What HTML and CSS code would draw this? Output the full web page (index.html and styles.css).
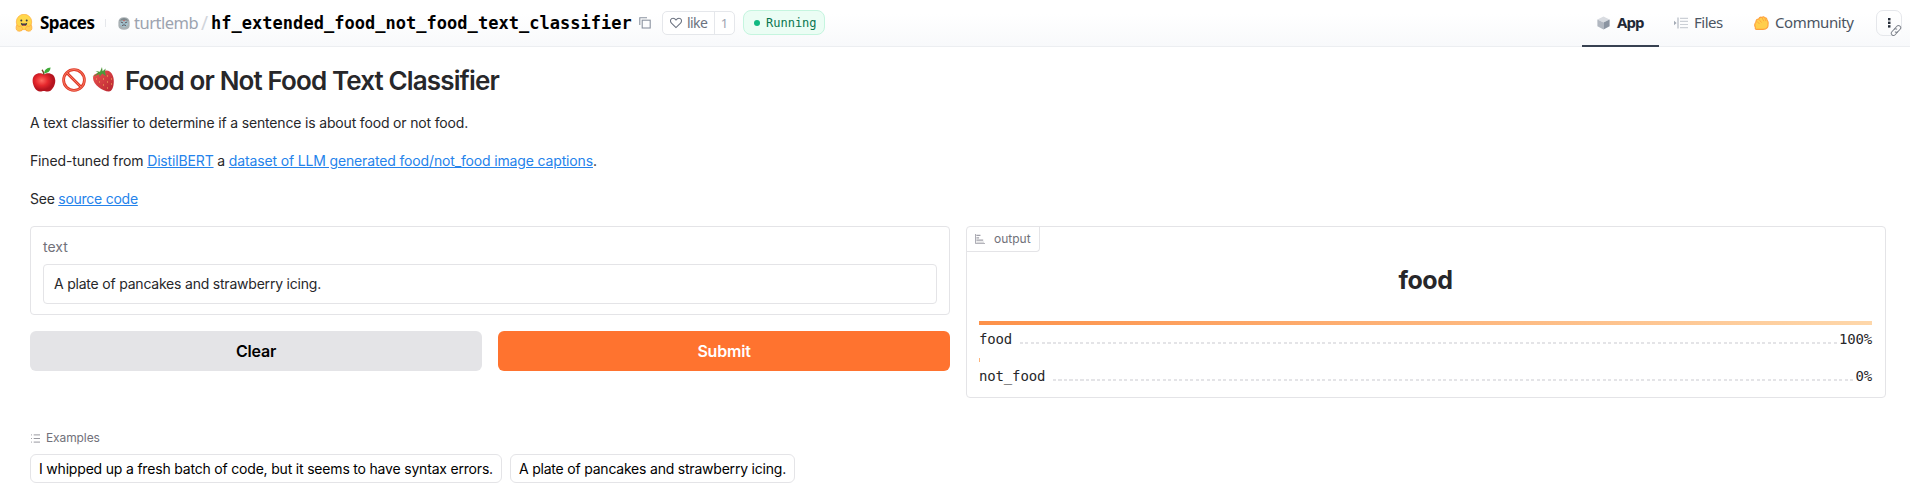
FILE: index.html
```html
<!DOCTYPE html>
<html lang="en">
<head>
<meta charset="utf-8">
<title>Food or Not Food Text Classifier</title>
<link rel="stylesheet" href="styles.css">
</head>
<body>
<header class="topbar">
  <svg class="hug" viewBox="0 0 18 18"><circle cx="9" cy="8" r="7.7" fill="#ffd84d" stroke="#ffb545" stroke-width=".8"/><circle cx="6.3" cy="6.4" r="1" fill="#3a3b45"/><circle cx="11.7" cy="6.4" r="1" fill="#3a3b45"/><path d="M5.8 8.7Q9 10.4 12.2 8.7Q12 12 9 12Q6 12 5.8 8.7Z" fill="#3a3b45"/><path d="M7.3 11.3Q9 10.2 10.7 11.3Q9 12.4 7.3 11.3Z" fill="#f0545a"/><path d="M1.3 12Q.3 17.2 4.4 17.2Q8 17.2 7.6 14.3L5.4 11.6L4.4 13L2.2 10.8Z" fill="#ffcd55" stroke="#ffab3d" stroke-width=".8"/><path d="M16.7 12Q17.7 17.2 13.6 17.2Q10 17.2 10.4 14.3L12.6 11.6L13.6 13L15.8 10.8Z" fill="#ffcd55" stroke="#ffab3d" stroke-width=".8"/></svg>
  <span class="spaces">Spaces</span>
  <span class="sep"></span>
  <svg class="avatar" viewBox="0 0 12 13"><path d="M.4 5Q.6.3 6 .3Q11.4.3 11.6 5V9Q11 12.8 6 12.8Q1 12.8.4 9Z" fill="#a9b1b4"/><path d="M1 4Q6-2 11 4L9 3.4H3Z" fill="#7f898d"/><path d="M2.2 4.4L6 3.4L9.8 4.4V8L6 10.4L2.2 8Z" fill="#a3c5d1"/><path d="M2.8 5L5.2 6M9.2 5L6.8 6M4 8.6Q6 7 8 8.6" stroke="#594a50" stroke-width=".9" fill="none"/><path d="M5.2 3L6 5L6.8 3Z" fill="#d44d45"/></svg>
  <span class="owner">turtlemb</span>
  <span class="slash">/</span>
  <span class="repo">hf_extended_food_not_food_text_classifier</span>
  <svg class="copy" viewBox="0 0 12 12" fill="none" stroke="#8a93a0" stroke-width="1.1"><path d="M.8 8V.8H8"/><rect x="3.2" y="3.2" width="8" height="7.8"/></svg>
  <div class="like"><span class="like-main"><svg viewBox="0 0 13 12" fill="none" stroke="#6b7280" stroke-width="1.1"><path d="M6.5 11L1.6 6.2C-.6 3.4 1 .9 3.3.9C5 .9 6 2 6.5 2.8C7 2 8 .9 9.7.9C12 .9 13.6 3.4 11.4 6.2Z"/></svg><span class="like-text">like</span></span><span class="like-count">1</span></div>
  <div class="status"><i></i><span>Running</span></div>
  <nav class="tabs">
    <a class="tab active"><svg class="cube" viewBox="0 0 13 14"><path d="M6.5.5L12.6 3.5L6.5 6.6L.4 3.5Z" fill="#d9dce1"/><path d="M.4 3.5L6.5 6.6V13.5L.4 10.3Z" fill="#b1b7c0"/><path d="M12.6 3.5L6.5 6.6V13.5L12.6 10.3Z" fill="#8b94a1"/></svg><span class="t-app">App</span></a>
    <a class="tab files"><svg class="tree" viewBox="0 0 14 12"><path d="M0 3.7L2.6 6L0 8.3Z" fill="#a4abb6"/><path d="M4 .5V11.5" stroke="#a4abb6" stroke-width="1"/><path d="M6 1.3H14M6 4.4H14M6 7.5H14M6 10.6H14" stroke="#ccd0d6" stroke-width="1.2"/></svg><span class="t-files">Files</span></a>
    <a class="tab community"><svg class="clap" viewBox="0 0 15 14"><path d="M.8 8.5Q1.2 6.8 1.8 6.4Q2 2.8 4.6 3Q6 .4 8 1.4Q9.6-.2 11 1.8Q13 1.6 13 4Q14.6 5.8 14 8Q14.6 13.2 9 13.4H2.6Q.8 13 1.4 11.2Q.5 10 .8 8.5Z" fill="#ffce4d" stroke="#ff9f3b" stroke-width="1.1"/><path d="M8 1.6L9.8 5.2M11 2.2L11.8 5.2M5 3.4L7.5 6.6M3 5.4L5.5 8" stroke="#ff9f3b" stroke-width=".8"/></svg><span class="t-comm">Community</span></a>
  </nav>
  <div class="more"><svg class="dots" viewBox="0 0 3 10" fill="#252c38"><rect width="2.5" height="2.4"/><rect y="3.6" width="2.5" height="2.4"/><rect y="7.2" width="2.5" height="2.4"/></svg>
  <svg class="link" viewBox="0 0 12 13"><circle cx="6" cy="6.5" r="6" fill="#fcfcfd"/><g transform="rotate(-48 6 6.5)" fill="none" stroke="#7d828b" stroke-width="1"><path d="M6.6 8.7H2.3A2.2 2.2 0 0 1 2.3 4.3H5.4A2.2 2.2 0 0 1 7.6 6.5"/><path d="M5.4 4.3H9.7A2.2 2.2 0 0 1 9.7 8.7H6.6A2.2 2.2 0 0 1 4.4 6.5"/></g></svg></div>
</header>
<main>
  <h1><svg class="emoji apple" viewBox="0 0 24 25"><defs><radialGradient id="ra" cx=".4" cy=".4"><stop offset="0" stop-color="#ff6a61"/><stop offset=".55" stop-color="#e6282d"/><stop offset="1" stop-color="#b5141f"/></radialGradient></defs><path d="M12 7.5C15 5.2 22.8 5.4 23.3 13.5C23.4 19 19.2 24.8 15.8 24.6C13.5 24.6 13 24 11.8 24C10.5 24 10 24.6 8 24.6C4 24.6.6 18.5.6 13.5C.8 5.6 8.5 5 12 7.5Z" fill="url(#ra)"/><path d="M12 8Q11.5 4.5 10 2.8" stroke="#774523" stroke-width="1.3" fill="none"/><path d="M12 6.4Q12.5 1 18.6.4Q18.3 5.7 12 6.4Z" fill="#3eaa38"/></svg><svg class="emoji" viewBox="0 0 24 25"><circle cx="12" cy="13" r="10.4" fill="#fff" stroke="#df3826" stroke-width="2.8"/><path d="M5 6L19 20" stroke="#df3826" stroke-width="2.8"/><circle cx="12" cy="13" r="10.5" fill="none" stroke="#fb8a72" stroke-width=".8"/><path d="M5 6L19 20" stroke="#fb8a72" stroke-width=".8"/></svg><svg class="emoji" viewBox="0 0 24 25"><defs><linearGradient id="rs" x2="1" y2="1"><stop offset="0" stop-color="#ed5350"/><stop offset="1" stop-color="#b82530"/></linearGradient></defs><path d="M1 11C1 5.6 8 6 13 3.8C18 2 22 8 21.8 14C21.8 20 20 24.5 16.8 24.6C11 24 1 18 1 11Z" fill="url(#rs)"/><path d="M0 9.6Q4.5 8 6 5.6L3.6 4L8 4.8L10 0L10.6 4.3L13.7 1.6L13 4.8L14 9.2L10.3 6.6L7.4 10L7.5 7Q4 8.6 0 9.6Z" fill="#4d983b"/><path d="M4 12h1M7 15h1M11 12h1M15 9h1M19 12h1M15 15h1M11 18h1M19 17h1M15 21h1" stroke="#f3bb59" stroke-width="1.2"/></svg><span class="title">Food or Not Food Text Classifier</span></h1>
  <p class="p1">A text classifier to determine if a sentence is about food or not food.</p>
  <p class="p2">Fined-tuned from <a>DistilBERT</a> a <a>dataset of LLM generated food/not_food image captions</a>.</p>
  <p class="p3">See <a>source code</a></p>
  <div class="columns">
    <section class="left">
      <div class="card"><label>text</label><div class="input"><span>A plate of pancakes and strawberry icing.</span></div></div>
      <div class="buttons"><button class="clear">Clear</button><button class="submit">Submit</button></div>
    </section>
    <section class="card output">
      <div class="tag"><svg viewBox="0 0 11 11"><path d="M.6 0V10.6H11" stroke="#a1a1aa" stroke-width="1" fill="none"/><path d="M1.5 1.5H6M1.5 4.2H4.5M1.5 6.7H9" stroke="#a1a1aa" stroke-width="1.4"/><path d="M1.5 9H10" stroke="#c4c4c9" stroke-width="1"/></svg><span>output</span></div>
      <h2><span>food</span></h2>
      <div class="bar" style="width:100%"></div>
      <div class="row"><span>food</span><i></i><span>100%</span></div>
      <div class="bar" style="width:1px"></div>
      <div class="row"><span>not_food</span><i></i><span>0%</span></div>
    </section>
  </div>
  <div class="examples-title"><svg viewBox="0 0 10 9" stroke="#8d8d95" stroke-width="1"><path d="M0 .5H1M3 .5H10M0 4.5H1M3 4.5H10M0 8.5H1M3 8.5H10"/></svg><span>Examples</span></div>
  <div class="chips"><span class="chip c1">I whipped up a fresh batch of code, but it seems to have syntax errors.</span><span class="chip c2">A plate of pancakes and strawberry icing.</span></div>
</main>
</body>
</html>
```
FILE: styles.css
```css
* { box-sizing: border-box; }
body { margin: 0; background: #fff; color: #27272a; font: 14px/20px Inter, sans-serif; height: 492px; overflow: hidden; }
svg { display: block; flex: none; }
span { white-space: nowrap; }
.topbar { height: 47px; display: flex; align-items: center; border-bottom: 1px solid #eceef1; background: linear-gradient(#fff 30%, #f8f9fb); padding: 0 8px 0 15px; font-family: "Noto Sans", sans-serif; font-size: 15px; }
.hug { width: 18px; height: 18px; margin: -1px 7px 0 0; }
.spaces { width: 55px; padding-bottom: 1px; font-weight: 700; color: #000; font-size: 17px; letter-spacing: -.55px; }
.sep { width: 1px; height: 8px; background: #e5e7eb; margin: 0 12px 0 10px; }
.avatar { width: 12px; height: 13px; margin-right: 4px; }
.owner { width: 67px; padding-bottom: 1px; color: #9ca3af; font-size: 16.5px; letter-spacing: -.5px; }
.slash { width: 10px; padding-bottom: 1px; color: #d1d5db; font-size: 19px; }
.repo { width: 428px; color: #000; font: 700 17px/20px "DejaVu Sans Mono", monospace; letter-spacing: .03px; }
.copy { width: 12px; height: 12px; margin-right: 11px; }
.like { width: 73px; height: 24px; border: 1px solid #e5e7eb; border-radius: 5px; display: flex; background: #fff; color: #6b7280; font-size: 14px; line-height: 22px; }
.like-main { width: 52px; padding-left: 7px; display: flex; align-items: center; gap: 5px; border-right: 1px solid #e5e7eb; }
.like-main svg { width: 12px; height: 12px; }
.like-text { letter-spacing: -.6px; }
.like-count { flex: 1; text-align: center; color: #9ca3af; font-size: 13px; }
.status { margin: -1px 0 0 8px; width: 82px; height: 25px; border: 1px solid #c5f5df; background: #ebfdf4; border-radius: 8px; display: flex; align-items: center; padding-left: 10px; gap: 6px; color: #08754f; font: 12px/20px "DejaVu Sans Mono", monospace; }
.status i { width: 6px; height: 6px; border-radius: 3px; background: #10b981; }
.tabs { margin-left: auto; display: flex; align-self: stretch; color: #4b5563; }
.tab { display: flex; align-items: center; height: 47px; padding-bottom: 2px; }
.active { width: 77px; border-bottom: 2px solid #374151; padding: 0 0 0 15px; color: #1f2937; font-weight: 700; }
.tab span { padding-bottom: 1px; }
.cube { width: 13px; height: 14px; margin-right: 7px; }
.files { width: 95px; padding-left: 15px; }
.tree { width: 14px; height: 12px; margin-right: 6px; }
.community { width: 122px; }
.clap { width: 15px; height: 14px; margin-right: 6px; }
.t-app { letter-spacing: -.9px; }
.t-files { letter-spacing: -.5px; }
.t-comm { letter-spacing: -.4px; }
.more { position: relative; width: 26px; height: 26px; border: 1px solid #e5e7eb; border-radius: 7px; display: flex; align-items: center; justify-content: center; }
.dots { width: 3px; height: 10px; }
.link { position: absolute; width: 12px; height: 13px; right: -1px; bottom: -2px; }
main { padding: 15px 24px 0 30px; }
h1 { margin: 0; height: 38px; display: flex; align-items: center; font-size: 26px; line-height: 36px; font-weight: 600; }
.emoji { width: 24px; height: 25px; margin: -3px 6px 0 0; }
.apple { margin-left: 2px; }
.title { margin-left: 3px; padding-bottom: 1px; letter-spacing: -.87px; }
p { margin: 0 0 18px; line-height: 20px; }
.p1 { margin-top: 13px; letter-spacing: -.165px; }
.p2 { letter-spacing: -.15px; }
.p3 { letter-spacing: -.25px; }
p a { color: #2583eb; text-decoration: underline; }
.columns { display: grid; grid-template-columns: 1fr 1fr; align-items: start; gap: 16px; margin-top: -1px; }
.card { border: 1px solid #e4e4e7; border-radius: 4px; background: #fff; }
.left .card { height: 89px; padding: 10px 12px; }
label { display: block; line-height: 20px; color: #71717a; margin-bottom: 7px; }
.input { height: 40px; border: 1px solid #e4e4e7; border-radius: 4px; padding: 9px 10px; letter-spacing: -.21px; }
.buttons { display: grid; grid-template-columns: 1fr 1fr; gap: 16px; margin-top: 16px; }
button { height: 40px; border: 0; border-radius: 6px; font: 600 16px/20px Inter, sans-serif; padding: 0; letter-spacing: -.2px; }
.clear { background: #e4e4e7; color: #000; }
.submit { background: #ff732f; color: #fff; }
.output { height: 172px; padding: 0 13px 0 12px; }
.tag { width: 73px; height: 25px; margin-left: -12px; border: solid #e4e4e7; border-width: 0 1px 1px 0; border-radius: 0 0 4px 0; display: flex; align-items: center; padding: 0 0 1px 8px; gap: 9px; color: #71717a; font-size: 12px; }
.tag svg { width: 10px; height: 10px; margin-top: 1px; }
h2 { margin: 13px 0 25px; text-align: center; font-size: 25px; line-height: 31px; font-weight: 700; letter-spacing: -.5px; }
.bar { height: 4px; background: linear-gradient(90deg, #fd9149, #fed7aa); }
.row { display: flex; height: 33px; padding-top: 4px; font: 14px/20px "DejaVu Sans Mono", monospace; letter-spacing: -.15px; }
.row i { flex: 1; height: 2px; margin: 13px 0 0 8px; background: repeating-linear-gradient(90deg, #e4e4e7 0 3px, transparent 3px 5.5px); }
.examples-title { display: flex; align-items: center; gap: 6px; height: 20px; margin-top: 30px; color: #71717a; font-size: 12px; letter-spacing: -.1px; padding-left: 1px; }
.examples-title svg { width: 9px; height: 9px; }
.chips { display: flex; gap: 8px; margin-top: 6px; }
.chip { height: 29px; border: 1px solid #e4e4e7; border-radius: 6px; padding: 4px 8px; color: #000; letter-spacing: -.19px; }
.c1 { width: 472px; }
.c2 { width: 285px; letter-spacing: -.21px; }
```
